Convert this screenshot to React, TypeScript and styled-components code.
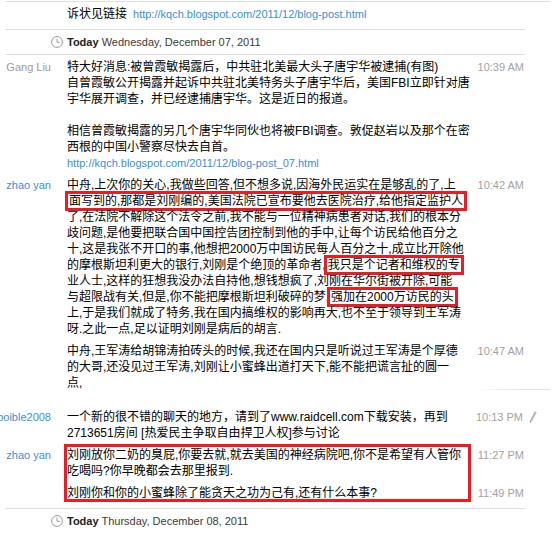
import { ReactNode } from 'react'
import styled, { createGlobalStyle } from 'styled-components'

const GlobalStyle = createGlobalStyle`
    body {
        margin: 0;
        background: #fff;
        font-family: "Liberation Sans", "Noto Sans CJK SC", sans-serif;
    }
`

const Log = styled.div`
    width: 520px;
    padding-left: 5px;
`

const Rule = styled.div<{ $wide?: boolean, $top?: boolean }>`
    height: 1px;
    background: #dfdfdf;
    margin: ${p => p.$top ? '1px' : '3px'} ${p => p.$wide ? '-25px' : '0'} 2px 0;
`

const GroupBreak = styled.div`
    width: 75px;
    height: 1px;
    margin: -6px 0 17px 470px;
    background: linear-gradient(to right, rgba(228, 228, 228, 0), #e2e2e2 60%);
`

const DateHeader = styled.div`
    display: flex;
    align-items: center;
    gap: 4px;
    padding: 2px 0 1px 46px;
    font: 11px/16px "Liberation Sans", sans-serif;
    color: #3a3a3a;
    white-space: nowrap;
`

const Strong = styled.b`
    color: #222;
`

const Group = styled.div`
    display: grid;
    grid-template-columns: 46px 16px 400px 1fr;
`

const Name = styled.div<{ $muted?: boolean }>`
    grid-column: 1;
    grid-row: 1;
    display: flex;
    justify-content: flex-end;
    white-space: nowrap;
    padding: 2px 0 4px;
    font: 11px/16px "Liberation Sans", sans-serif;
    color: ${p => p.$muted ? '#9b9b9b' : '#3d8ee4'};
`

const Body = styled.div<{ $row: number }>`
    grid-column: 3;
    grid-row: ${p => p.$row};
    padding: 2px 0 4px;
    font: 12px/16px "Liberation Sans", "Noto Sans CJK SC", sans-serif;
    color: #000;
`

const Line = styled.div`
    height: 16px;
    white-space: nowrap;
`

const Stamp = styled.div<{ $row: number }>`
    grid-column: 4;
    grid-row: ${p => p.$row};
    align-self: start;
    display: flex;
    align-items: center;
    justify-content: flex-end;
    height: 16px;
    padding: 2px 1px 4px 0;
    font: 11px/16px "Liberation Sans", sans-serif;
    color: #a2a2a2;
    white-space: nowrap;

    svg {
        margin: 0 -13px 0 6px;
    }
`

const Link = styled.span<{ $gap?: boolean }>`
    color: #3a8ee6;
    font-size: 11px;
    margin-left: ${p => p.$gap ? '6px' : '0'};
`

const Mark = styled.span`
    display: inline-block;
    height: 16px;
    vertical-align: top;
    padding: 0 2px;
    outline: 3px solid #ed1c24;
    outline-offset: -1px;
`

const Frame = styled.div`
    grid-column: 3;
    grid-row: 1 / 3;
    margin: 2px -1px 6px 0;
    outline: 3px solid #ed1c24;
    pointer-events: none;
`

const ClockIcon = () => (
    <svg width="12" height="12" viewBox="0 0 12 12">
        <circle cx="6" cy="6" r="5.4" fill="none" stroke="#9c9c9c" />
        <path d="M6 2.6V6.3h2.8" fill="none" stroke="#9c9c9c" />
    </svg>
)

const PencilIcon = () => (
    <svg width="8" height="12" viewBox="0 0 8 12">
        <path d="M6.8 0.8L2.2 9.6" stroke="#b9b9b9" strokeWidth="2.2" />
        <path d="M2.2 9.6L1.3 11.4" stroke="#8a8a8a" strokeWidth="1.2" />
    </svg>
)

const Lines = ({ lines }: { lines: ReactNode[] }) => (
    <>
        {lines.map((line, i) => <Line key={i}>{line === '' ? '\u00a0' : line}</Line>)}
    </>
)

const gangLiu: ReactNode[] = [
    '特大好消息:被曾霞敏揭露后，中共驻北美最大头子唐宇华被逮捕(有图)',
    '自曾霞敏公开揭露并起诉中共驻北美特务头子唐宇华后，美国FBI立即针对唐',
    '宇华展开调查，并已经逮捕唐宇华。这是近日的报道。',
    '',
    '相信曾霞敏揭露的另几个唐宇华同伙也将被FBI调查。敦促赵岩以及那个在密',
    '西根的中国小警察尽快去自首。',
    <Link>http://kqch.blogspot.com/2011/12/blog-post_07.html</Link>,
]

const zhaoFirst: ReactNode[] = [
    '中舟,上次你的关心,我做些回答,但不想多说,因海外民运实在是够乱的了,上',
    <Mark>面写到的,那都是刘刚编的,美国法院已宣布要他去医院治疗,给他指定监护人</Mark>,
    '了,在法院不解除这个法令之前,我不能与一位精神病患者对话,我们的根本分',
    '歧问题,是他要把联合国中国控告团控制到他的手中,让每个访民给他百分之',
    '十,这是我张不开口的事,他想把2000万中国访民每人百分之十,成立比开除他',
    <>的摩根斯坦利更大的银行,刘刚是个绝顶的革命者,<Mark>我只是个记者和维权的专</Mark></>,
    '业人士,这样的狂想我没办法自持他,想钱想疯了,刘刚在华尔街被开除,可能',
    <>与超限战有关,但是,你不能把摩根斯坦利破碎的梦,<Mark>强加在2000万访民的头</Mark></>,
    '上,于是我们就成了特务,我在国内搞维权的影响再大,也不至于领导到王军涛',
    '呀.之此一点,足以证明刘刚是病后的胡言.',
]

const zhaoSecond: ReactNode[] = [
    '中舟,王军涛给胡锦涛拍砖头的时候,我还在国内只是听说过王军涛是个厚德',
    '的大哥,还没见过王军涛,刘刚让小蜜蜂出道打天下,能不能把谎言扯的圆一',
    '点,',
]

const boible: ReactNode[] = [
    '一个新的很不错的聊天的地方，请到了www.raidcell.com下载安装，再到',
    '2713651房间 [热爱民主争取自由捍卫人权]参与讨论',
]

const App = () => {
    return (
        <>
            <GlobalStyle />
            <Log>
                <Rule $top $wide />
                <Group>
                    <Body $row={1}>
                        <Line>诉状见链接<Link $gap>http://kqch.blogspot.com/2011/12/blog-post.html</Link></Line>
                    </Body>
                </Group>
                <Rule />
                <DateHeader>
                    <ClockIcon />
                    <span><Strong>Today</Strong> Wednesday, December 07, 2011</span>
                </DateHeader>
                <Rule />
                <Group>
                    <Name $muted>Gang Liu</Name>
                    <Body $row={1}><Lines lines={gangLiu} /></Body>
                    <Stamp $row={1}>10:39 AM</Stamp>
                </Group>
                <Group>
                    <Name>zhao yan</Name>
                    <Body $row={1}><Lines lines={zhaoFirst} /></Body>
                    <Stamp $row={1}>10:42 AM</Stamp>
                    <Body $row={2}><Lines lines={zhaoSecond} /></Body>
                    <Stamp $row={2}>10:47 AM</Stamp>
                </Group>
                <GroupBreak />
                <Group>
                    <Name>boible2008</Name>
                    <Body $row={1}><Lines lines={boible} /></Body>
                    <Stamp $row={1}>10:13 PM<PencilIcon /></Stamp>
                </Group>
                <Group>
                    <Name>zhao yan</Name>
                    <Body $row={1}>
                        <Lines lines={[
                            '刘刚放你二奶的臭屁,你要去就,就去美国的神经病院吧,你不是希望有人管你',
                            '吃喝吗?你早晚都会去那里报到.',
                        ]} />
                    </Body>
                    <Stamp $row={1}>11:27 PM</Stamp>
                    <Body $row={2}>
                        <Line>刘刚你和你的小蜜蜂除了能贪天之功为己有,还有什么本事?</Line>
                    </Body>
                    <Stamp $row={2}>11:49 PM</Stamp>
                    <Frame />
                </Group>
                <Rule />
                <DateHeader>
                    <ClockIcon />
                    <span><Strong>Today</Strong> Thursday, December 08, 2011</span>
                </DateHeader>
            </Log>
        </>
    )
}

export default App
